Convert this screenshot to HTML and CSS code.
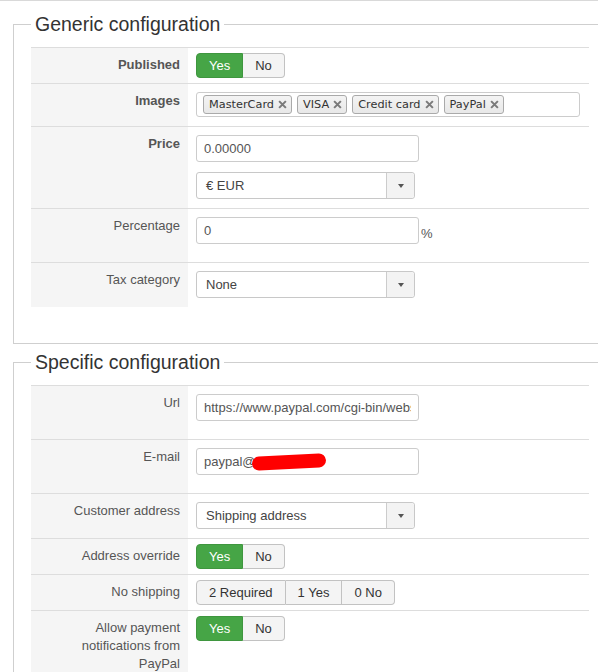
FILE: index.html
```html
<!DOCTYPE html>
<html lang="en">
<head>
<meta charset="utf-8">
<title>Payment method configuration</title>
<link rel="stylesheet" href="styles.css">
</head>
<body>
<div class="topline"></div>

<fieldset class="panel">
  <legend>Generic configuration</legend>
  <table class="form">
    <colgroup><col class="c-lbl"><col class="c-val"></colgroup>
    <tr>
      <td class="lbl strong">Published</td>
      <td class="val">
        <div class="btn-group"><span class="btn on">Yes</span><span class="btn">No</span></div>
      </td>
    </tr>
    <tr>
      <td class="lbl strong">Images</td>
      <td class="val">
        <div class="tags">
          <span class="chip">MasterCard<svg class="x" viewBox="0 0 8 8"><path d="M1 1L7 7M7 1L1 7"/></svg></span>
          <span class="chip">VISA<svg class="x" viewBox="0 0 8 8"><path d="M1 1L7 7M7 1L1 7"/></svg></span>
          <span class="chip">Credit card<svg class="x" viewBox="0 0 8 8"><path d="M1 1L7 7M7 1L1 7"/></svg></span>
          <span class="chip">PayPal<svg class="x" viewBox="0 0 8 8"><path d="M1 1L7 7M7 1L1 7"/></svg></span>
        </div>
      </td>
    </tr>
    <tr>
      <td class="lbl strong">Price</td>
      <td class="val">
        <input class="text stacked" type="text" value="0.00000">
        <div class="select flush"><span class="sel-val">€ EUR</span><span class="sel-arrow"><i></i></span></div>
      </td>
    </tr>
    <tr>
      <td class="lbl">Percentage</td>
      <td class="val">
        <div class="addon-row"><input class="text inline" type="text" value="0"><span class="addon">%</span></div>
      </td>
    </tr>
    <tr>
      <td class="lbl">Tax category</td>
      <td class="val">
        <div class="select"><span class="sel-val">None</span><span class="sel-arrow"><i></i></span></div>
      </td>
    </tr>
  </table>
</fieldset>

<fieldset class="panel second">
  <legend>Specific configuration</legend>
  <table class="form">
    <colgroup><col class="c-lbl"><col class="c-val"></colgroup>
    <tr>
      <td class="lbl">Url</td>
      <td class="val"><input class="text" type="text" value="https://www.paypal.com/cgi-bin/webscr"></td>
    </tr>
    <tr>
      <td class="lbl">E-mail</td>
      <td class="val">
        <div class="redact-wrap"><input class="text inline" type="text" value="paypal@"><span class="redact"></span></div>
      </td>
    </tr>
    <tr>
      <td class="lbl">Customer address</td>
      <td class="val">
        <div class="select"><span class="sel-val">Shipping address</span><span class="sel-arrow"><i></i></span></div>
      </td>
    </tr>
    <tr>
      <td class="lbl">Address override</td>
      <td class="val">
        <div class="btn-group"><span class="btn on">Yes</span><span class="btn">No</span></div>
      </td>
    </tr>
    <tr>
      <td class="lbl">No shipping</td>
      <td class="val">
        <div class="btn-group"><span class="btn">2 Required</span><span class="btn">1 Yes</span><span class="btn">0 No</span></div>
      </td>
    </tr>
    <tr>
      <td class="lbl">Allow payment<br>notifications from<br>PayPal</td>
      <td class="val">
        <div class="btn-group"><span class="btn on">Yes</span><span class="btn">No</span></div>
      </td>
    </tr>
  </table>
</fieldset>
</body>
</html>
```

FILE: styles.css
```css
html, body {
  overflow: hidden;
}
body {
  margin: 0;
  background: #fff;
  font-family: "Liberation Sans", Arial, sans-serif;
  font-size: 13px;
  line-height: 18px;
  color: #555;
}
.topline {
  height: 1px;
  background: #d9d9d9;
}
.panel {
  margin: 11px 0 0 13px;
  padding: 0 17px 36px 17px;
  border: 1px solid #cfcfcf;
  width: 558px;
  min-width: 0;
  box-sizing: content-box;
}
.panel.second {
  margin-top: 6px;
}
.panel legend {
  padding: 0 4px;
  margin: 0;
  font-size: 19.5px;
  line-height: 25px;
  color: #333;
}
.form {
  width: 558px;
  margin-top: 10px;
  table-layout: fixed;
  border-collapse: separate;
  border-spacing: 0;
}
.c-lbl {
  width: 157px;
}
.c-val {
  width: 401px;
}
.form td {
  border-top: 1px solid #ddd;
  vertical-align: top;
}
.lbl {
  padding: 8px 8px 0 8px;
  background: #f5f5f5;
  text-align: right;
  color: #555;
}
.lbl.strong {
  font-weight: bold;
}
.val {
  padding: 5px 8px 5px 8px;
}

/* buttons */
.btn-group {
  display: flex;
}
.btn {
  display: block;
  height: 25px;
  box-sizing: border-box;
  padding: 3px 12px;
  line-height: 17px;
  border: 1px solid #c2c2c2;
  border-left-width: 0;
  background: #f4f4f4;
  color: #333;
}
.btn:first-child {
  border-left-width: 1px;
  border-radius: 4px 0 0 4px;
}
.btn:last-child {
  border-radius: 0 4px 4px 0;
}
.btn.on {
  background: #46a546;
  border-color: #3f963f;
  color: #fff;
}

/* text inputs */
.text {
  display: block;
  width: 223px;
  height: 27px;
  box-sizing: border-box;
  margin: 3px 0 13px;
  padding: 0 7px;
  border: 1px solid #ccc;
  border-radius: 3px;
  font-family: "Liberation Sans", Arial, sans-serif;
  font-size: 13px;
  color: #555;
  background: #fff;
  outline: none;
}
.text.stacked {
  margin-bottom: 10px;
}
.text.inline {
  margin: 0;
}
.addon-row {
  display: flex;
  align-items: flex-end;
  margin: 3px 0 13px;
}
.addon {
  line-height: 16px;
  margin: 0 0 2px 2px;
  color: #555;
}
.redact-wrap {
  position: relative;
  width: 223px;
  margin: 3px 0 13px;
}
.redact {
  position: absolute;
  left: 56px;
  top: 7px;
  width: 74px;
  height: 14px;
  border-radius: 8px;
  background: #ff0000;
  transform: rotate(-3deg);
}

/* chosen-like select */
.select {
  display: flex;
  width: 219px;
  height: 27px;
  box-sizing: border-box;
  margin: 3px 0 4px;
  border: 1px solid #c8c8c8;
  border-radius: 3px;
  background: #fff;
  color: #444;
}
.select.flush {
  margin-top: 0;
}
.sel-val {
  flex: 1;
  padding: 0 9px;
  line-height: 25px;
}
.sel-arrow {
  width: 27px;
  border-left: 1px solid #ccc;
  background: #f3f3f3;
  border-radius: 0 3px 3px 0;
  display: flex;
  align-items: center;
  justify-content: center;
}
.sel-arrow i {
  width: 0;
  height: 0;
  border-top: 4px solid #555;
  border-left: 3.5px solid transparent;
  border-right: 3.5px solid transparent;
}

/* tag input */
.tags {
  display: flex;
  align-items: center;
  gap: 5px;
  width: 384px;
  height: 25px;
  box-sizing: border-box;
  margin: 3px 0 4px;
  padding: 0 6px;
  border: 1px solid #ccc;
  border-radius: 3px;
  background: #fff;
}
.chip {
  display: flex;
  align-items: center;
  height: 19px;
  box-sizing: border-box;
  padding: 0 4px 0 5px;
  border: 1px solid #aaa;
  border-radius: 3px;
  background: linear-gradient(#f4f4f4, #e8e8e8);
  font-family: "DejaVu Sans", Verdana, sans-serif;
  font-size: 11.3px;
  line-height: 17px;
  color: #333;
}
.chip .x {
  width: 9px;
  height: 9px;
  margin-left: 4px;
  fill: none;
  stroke: #7a7a7a;
  stroke-width: 1.8;
}
```
